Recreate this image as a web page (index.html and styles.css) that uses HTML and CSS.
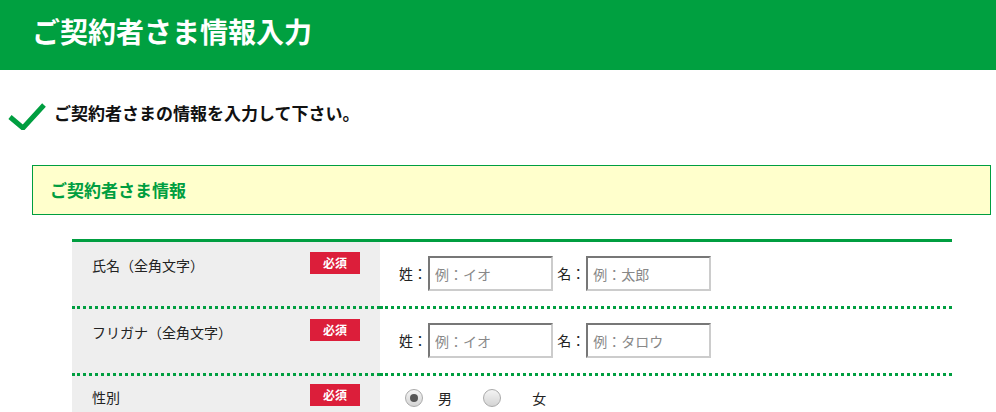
FILE: index.html
```html
<!DOCTYPE html>
<html lang="ja">

<head>
    <meta charset="UTF-8">
    <meta name="viewport" content="width=device-width, initial-scale=1.0">
    <title>ご契約者さま情報入力</title>
    <link rel="stylesheet" href="styles.css">
</head>

<body>
    <h1 class="page-title">ご契約者さま情報入力</h1>

    <p class="lead">
        <svg class="lead-check" width="38" height="28" viewBox="0 0 38 28">
            <path d="M2 15 L15 26 L36 3" fill="none" stroke="#009e40" stroke-width="5"/>
        </svg>
        <span class="lead-text">ご契約者さまの情報を入力して下さい。</span>
    </p>

    <h2 class="box-title">ご契約者さま情報</h2>

    <table class="form-table">
        <tr>
            <th><span class="th-text">氏名（全角文字）</span><span class="req">必須</span></th>
            <td>
                <label class="name-label">姓：</label><input type="text" placeholder="例：イオ">
                <label class="name-label">名：</label><input type="text" placeholder="例：太郎">
            </td>
        </tr>
        <tr>
            <th><span class="th-text">フリガナ（全角文字）</span><span class="req">必須</span></th>
            <td>
                <label class="name-label">姓：</label><input type="text" placeholder="例：イオ">
                <label class="name-label">名：</label><input type="text" placeholder="例：タロウ">
            </td>
        </tr>
        <tr>
            <th class="th-short"><span class="th-text">性別</span><span class="req">必須</span></th>
            <td class="radio-cell">
                <label class="radio"><input type="radio" name="sex" checked><span>男</span></label>
                <label class="radio"><input type="radio" name="sex"><span>女</span></label>
            </td>
        </tr>
    </table>
</body>

</html>
```

FILE: styles.css
```css
* {
    margin: 0;
    padding: 0;
    box-sizing: border-box;
}

body {
    font-family: "Noto Sans CJK JP", "Noto Sans", sans-serif;
    color: #222;
    background: #fff;
}

.page-title {
    height: 70px;
    padding: 12px 0 0 32px;
    background-color: #00a040;
    color: #fff;
    font-size: 28px;
    line-height: 38px;
    font-weight: bold;
}

.lead {
    display: flex;
    align-items: flex-start;
    margin-top: 32px;
    padding-left: 8px;
    font-size: 17px;
    font-weight: bold;
    color: #111;
    line-height: 22px;
}

.lead-check {
    margin-right: 8px;
}

.box-title {
    width: 959px;
    height: 50px;
    margin: 35px 0 0 32px;
    padding-left: 17px;
    border: 1px solid #009e40;
    background-color: #ffffcc;
    color: #009e40;
    font-size: 17px;
    font-weight: bold;
    line-height: 48px;
}

.form-table {
    width: 880px;
    margin: 24px 0 0 72px;
    border-collapse: separate;
    border-spacing: 0;
    border-top: 3px solid #009e40;
}

.form-table th,
.form-table td {
    height: 67px;
    border-bottom: 3px dotted #009e40;
    vertical-align: top;
}

.form-table th {
    width: 308px;
    padding: 12px 20px 0 20px;
    background-color: #eeeeee;
    font-weight: normal;
    text-align: left;
    font-size: 14px;
}

.form-table th.th-short {
    padding-top: 10px;
}

.form-table th .th-text {
    display: inline-block;
    line-height: 22px;
}

.req {
    float: right;
    width: 50px;
    height: 22px;
    margin-top: -2px;
    background-color: #dc1e3a;
    color: #fff;
    font-size: 12px;
    font-weight: bold;
    text-align: center;
    line-height: 22px;
}

.form-table td {
    padding: 14px 0 0 19px;
    font-size: 14px;
}

.name-label {
    display: inline-block;
    width: 29px;
    line-height: 35px;
    vertical-align: top;
}

.form-table input[type="text"] {
    width: 125px;
    height: 35px;
    margin-right: 1px;
    padding: 0 5px;
    border-style: solid;
    border-width: 2px;
    border-color: #777 #ccc #ccc #777;
    font-family: "Noto Sans CJK JP", "Noto Sans", sans-serif;
    font-size: 14px;
    color: #222;
    vertical-align: top;
    outline: none;
}

.form-table input::placeholder {
    color: #888;
}

.form-table .radio-cell {
    padding: 12px 0 0 25px;
}

.radio {
    display: inline-flex;
    align-items: center;
    margin-right: 28px;
    line-height: 20px;
}

.radio input {
    appearance: none;
    width: 18px;
    height: 18px;
    margin-right: 15px;
    border: 1px solid #aaa;
    border-radius: 50%;
    background: linear-gradient(#f4f4f4, #d4d4d4);
    position: relative;
}

.radio input:checked::after {
    content: "";
    position: absolute;
    left: 4px;
    top: 4px;
    width: 8px;
    height: 8px;
    border-radius: 50%;
    background-color: #555;
}

.radio + .radio span {
    margin-left: 16px;
}
```
